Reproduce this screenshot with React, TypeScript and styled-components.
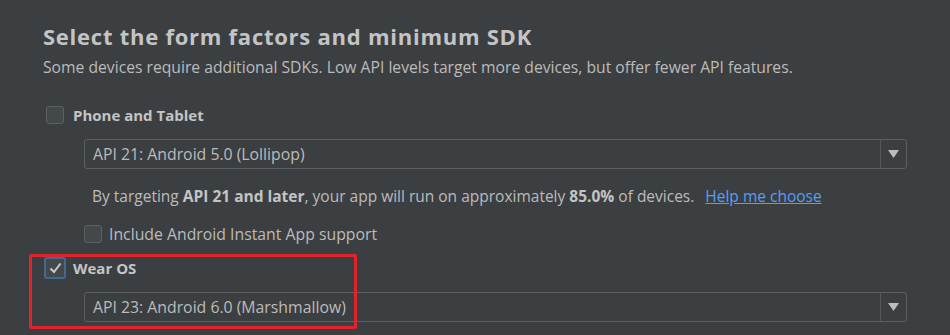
import React from "react";
import styled, { createGlobalStyle } from "styled-components";

const GlobalStyle = createGlobalStyle`
  html, body {
    margin: 0;
    padding: 0;
    background: #3c3f41;
  }
  body {
    font-family: "Open Sans", "Noto Sans", "Liberation Sans", sans-serif;
    color: #bbbbbb;
  }
`;

const Page = styled.div`
  position: relative;
  width: 950px;
  height: 335px;
  overflow: hidden;
  box-sizing: border-box;
  padding: 21px 0 0 43px;
  background: #3c3f41;
`;

const Title = styled.h1`
  margin: 0;
  font-size: 22px;
  font-weight: 700;
  letter-spacing: 0.75px;
  line-height: 30px;
  color: #c4c4c4;
`;

const Subtitle = styled.p`
  margin: 5px 0 0;
  font-size: 15.7px;
  line-height: 22px;
  color: #bbbbbb;
`;

const Section = styled.div`
  display: flex;
  flex-direction: column;
  margin-top: ${(p) => p.$top}px;
`;

const CheckRow = styled.label`
  display: flex;
  align-items: center;
  gap: ${(p) => p.$gap ?? 9}px;
  margin-left: ${(p) => p.$indent ?? 0}px;
  margin-top: ${(p) => p.$top ?? 0}px;
  height: 24px;
`;

const Box = styled.span`
  box-sizing: border-box;
  width: ${(p) => (p.$checked ? 22 : 18)}px;
  height: ${(p) => (p.$checked ? 22 : 18)}px;
  margin-left: ${(p) => (p.$checked ? 1 : 3)}px;
  margin-right: ${(p) => (p.$checked ? -2 : 0)}px;
  border-radius: 3px;
  background: #43494a;
  border: ${(p) => (p.$checked ? "2px solid #44698f" : "1px solid #5d6163")};
  display: flex;
  align-items: center;
  justify-content: center;
`;

const CheckLabel = styled.span`
  font-size: ${(p) => (p.$bold ? 15 : 15.8)}px;
  font-weight: ${(p) => (p.$bold ? 700 : 400)};
  color: ${(p) => (p.$bold ? "#c4c4c4" : "#bbbbbb")};
`;

const Combo = styled.div`
  display: flex;
  align-items: stretch;
  box-sizing: border-box;
  margin-left: 41px;
  width: 823px;
  height: 30px;
  border: 1px solid #5e6060;
  border-radius: 3px;
  margin-top: ${(p) => p.$top}px;
`;

const ComboValue = styled.div`
  flex: 1;
  display: flex;
  align-items: center;
  padding-left: 8px;
  font-size: 15.8px;
  color: #bbbbbb;
`;

const ComboArrow = styled.div`
  width: 25px;
  border-left: 1px solid #555859;
  display: flex;
  align-items: center;
  justify-content: center;
`;

const Info = styled.p`
  margin: 15px 0 0 49px;
  font-size: 15.5px;
  line-height: 24px;
  color: #bbbbbb;

  b {
    font-weight: 700;
    color: #c4c4c4;
  }
`;

const HelpLink = styled.a`
  margin-left: 11px;
  color: #589df6;
  text-decoration: underline;
`;

const Highlight = styled.div`
  position: absolute;
  left: 29px;
  top: 254px;
  width: 328px;
  height: 75px;
  box-sizing: border-box;
  border: 3px solid #e0242c;
  border-radius: 2px;
  pointer-events: none;
`;

const Arrow = () => (
  <svg width="11" height="8" viewBox="0 0 11 8">
    <path d="M0 0 H11 L5.5 8 Z" fill="#bdbdbd" />
  </svg>
);

const Tick = () => (
  <svg width="13" height="12" viewBox="0 0 13 12">
    <path d="M1.5 6.5 L5 10 L11.5 1.5" fill="none" stroke="#c9c9c9" strokeWidth="2" />
  </svg>
);

export default function App() {
  return (
    <Page>
      <GlobalStyle />
      <Title>Select the form factors and minimum SDK</Title>
      <Subtitle>
        Some devices require additional SDKs. Low API levels target more devices, but offer fewer API features.
      </Subtitle>

      <Section $top={25}>
        <CheckRow>
          <Box />
          <CheckLabel $bold>Phone and Tablet</CheckLabel>
        </CheckRow>
        <Combo $top={12}>
          <ComboValue>API 21: Android 5.0 (Lollipop)</ComboValue>
          <ComboArrow>
            <Arrow />
          </ComboArrow>
        </Combo>
        <Info>
          By targeting <b>API 21 and later</b>, your app will run on approximately <b>85.0%</b> of devices.
          <HelpLink href="#">Help me choose</HelpLink>
        </Info>
        <CheckRow $indent={38} $gap={7} $top={14}>
          <Box />
          <CheckLabel>Include Android Instant App support</CheckLabel>
        </CheckRow>
      </Section>

      <Section $top={10}>
        <CheckRow>
          <Box $checked>
            <Tick />
          </Box>
          <CheckLabel $bold>Wear OS</CheckLabel>
        </CheckRow>
        <Combo $top={12}>
          <ComboValue>API 23: Android 6.0 (Marshmallow)</ComboValue>
          <ComboArrow>
            <Arrow />
          </ComboArrow>
        </Combo>
      </Section>

      <Highlight />
    </Page>
  );
}
